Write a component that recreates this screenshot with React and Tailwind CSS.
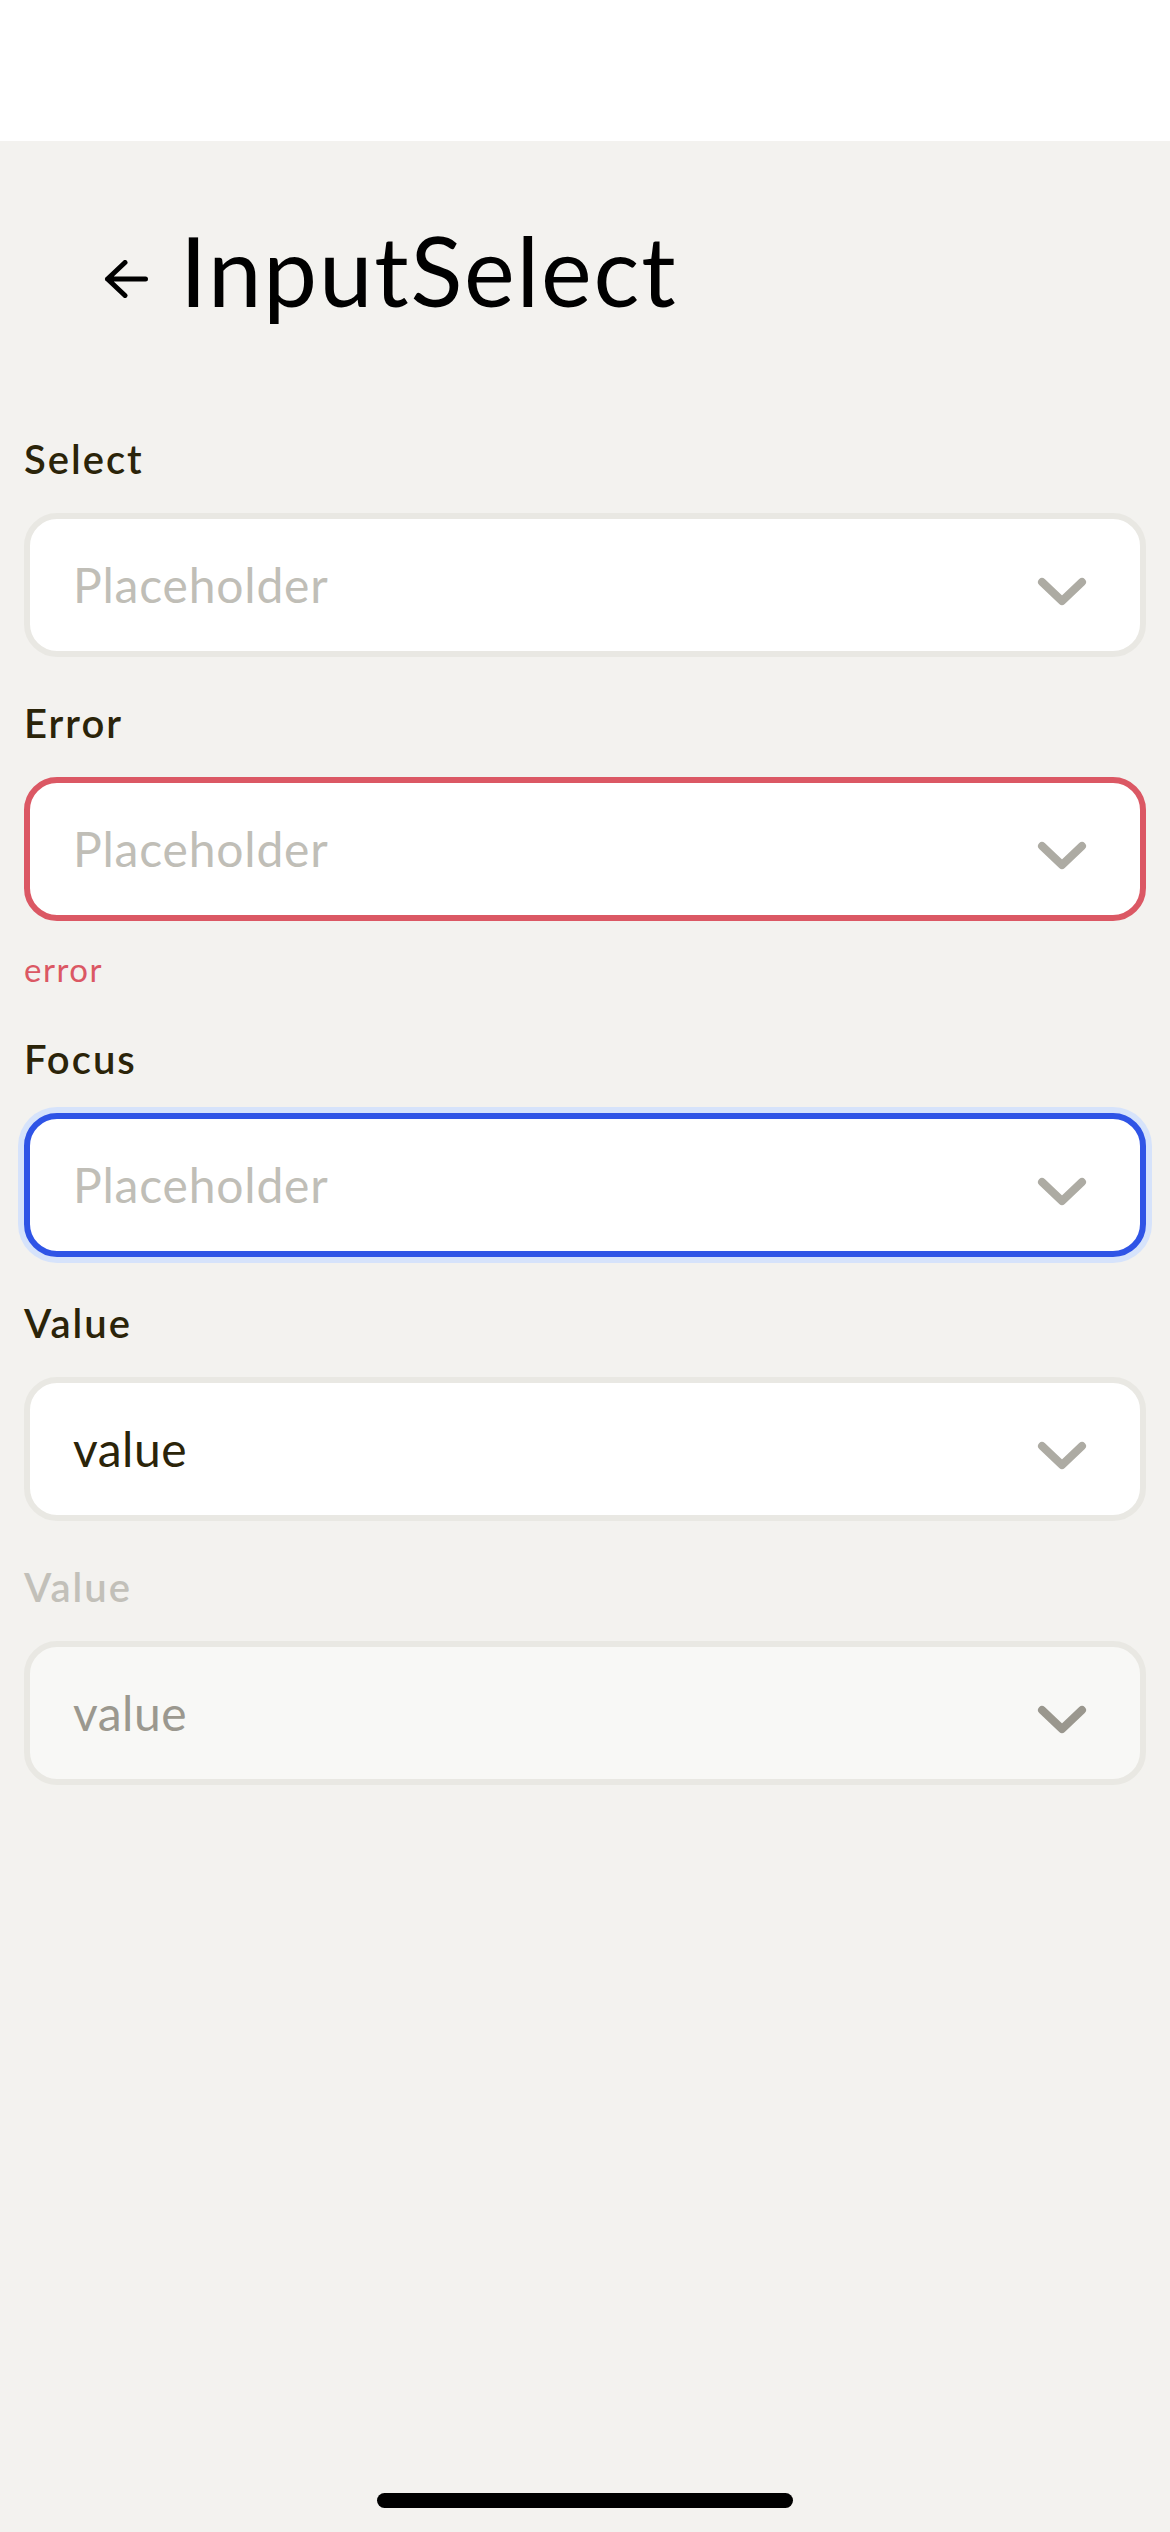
const font = { fontFamily: "Lato, 'Noto Sans', sans-serif" };

const Chevron = ({ color }) => (
  <svg width="50" height="30" viewBox="0 0 50 30" fill="none" className="mt-[13px] shrink-0">
    <polyline points="5,5 25,24 45,5" stroke={color} strokeWidth="8" strokeLinecap="round" strokeLinejoin="round" />
  </svg>
);

const Field = ({ label, text, state = "default", error, className = "" }) => {
  const disabled = state === "disabled";
  const placeholder = !text;

  let box = "border-[#e9e8e3] bg-white";
  if (state === "error") box = "border-[#db5864] bg-white";
  if (state === "focus") box = "border-[#2f54e6] bg-white shadow-[0_0_0_6px_#d6e3fb]";
  if (disabled) box = "border-[#e9e8e3] bg-[#f8f8f6]";

  let textColor = "text-[#2b2409]";
  if (placeholder) textColor = "text-[#c0beb7]";
  if (disabled) textColor = "text-[#9b988f]";

  return (
    <div className={"flex flex-col " + className}>
      <div className={"text-[40px] leading-[48px] font-semibold tracking-[2px] " + (disabled ? "text-[#c2c0b9]" : "text-[#2b2409]")}>
        {label}
      </div>
      <div className={"mt-[30px] h-[144px] rounded-[33px] border-[6px] flex items-center justify-between pl-[43px] pr-[53px] " + box}>
        <span className={"text-[48px] leading-[58px] " + (placeholder ? "tracking-[0.8px] " : "tracking-[0.5px] ") + textColor}>
          {text || "Placeholder"}
        </span>
        <Chevron color={disabled ? "#9a978e" : "#adaba3"} />
      </div>
      {error && (
        <div className="mt-[28px] text-[33px] leading-[40px] tracking-[1.5px] text-[#db5864]">{error}</div>
      )}
    </div>
  );
};

export default function App() {
  return (
    <div className="min-h-[2532px] flex flex-col bg-[#f3f2ef]" style={font}>
      {/* status bar area */}
      <div className="h-[141px] bg-white" />

      {/* Header */}
      <div className="mt-[71px] flex items-start pl-[104px] gap-[32px]">
        <svg width="44" height="38" viewBox="0 0 44 38" fill="none" className="mt-[48px] shrink-0">
          <path d="M41.5 19H3.5M21 2.5L3.5 19L21 35.5" stroke="#000" strokeWidth="5" strokeLinecap="round" strokeLinejoin="round" />
        </svg>
        <h1 className="text-[96px] leading-[116px] text-black font-normal tracking-[1.8px]">InputSelect</h1>
      </div>

      {/* Fields */}
      <div className="mt-[107px] px-[24px] flex flex-col">
        <Field label="Select" />
        <Field label="Error" state="error" error="error" className="mt-[42px]" />
        <Field label="Focus" state="focus" className="mt-[46px]" />
        <Field label="Value" text="value" className="mt-[42px]" />
        <Field label="Value" text="value" state="disabled" className="mt-[42px]" />
      </div>

      {/* Home indicator */}
      <div className="mt-auto mb-[24px] self-center w-[416px] h-[15px] rounded-full bg-black" />
    </div>
  );
}
